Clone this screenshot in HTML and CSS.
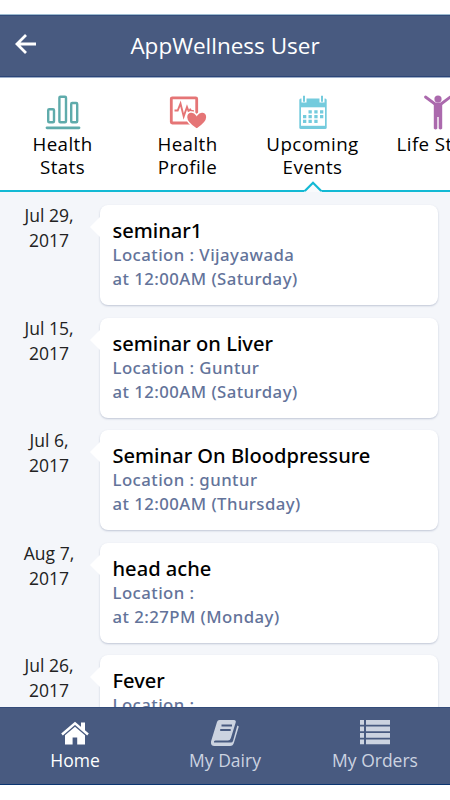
FILE: index.html
```html
<!DOCTYPE html>
<html lang="en">
<head>
    <meta charset="UTF-8">
    <meta name="viewport" content="width=device-width, initial-scale=1.0">
    <title>AppWellness User</title>
    <link rel="stylesheet" href="styles.css">
</head>
<body>
    <div class="app">

        <!-- Header -->
        <header class="header">
            <svg class="back" width="22" height="22" viewBox="0 0 22 22">
                <path d="M11 1L2 10l9 9M2 10h19" fill="none" stroke="#fff" stroke-width="2.8"/>
            </svg>
            <h1>AppWellness User</h1>
        </header>

        <!-- Tabs -->
        <nav class="tabs">
            <div class="tab">
                <svg width="36" height="36" viewBox="0 0 36 36">
                    <g fill="none" stroke="#5fabab" stroke-width="2.4">
                        <rect x="3.2" y="14.2" width="5.8" height="13" rx="1"/>
                        <rect x="14.4" y="1.7" width="6.6" height="25.5" rx="1"/>
                        <rect x="26.2" y="8" width="6" height="19.2" rx="1"/>
                        <path d="M2 32.8h32" stroke-width="2.8" stroke-linecap="round"/>
                    </g>
                </svg>
                <span>Health<br>Stats</span>
            </div>
            <div class="tab">
                <svg width="36" height="36" viewBox="0 0 36 36">
                    <g fill="none" stroke="#e57576">
                        <rect x="1.3" y="2.8" width="25.4" height="25.2" rx="1" stroke-width="2.8"/>
                        <path d="M4.500 15.500h3.200l2.800-7 3.200 13 3.300-9.500 1.700 4.500 1.500-2 1.200 1.500h2.400" stroke-width="1.900"/>
                    </g>
                    <path d="M26.700 34.200c-3-2-10.200-6.200-10.200-11.900 0-6 7-7.200 10.200-2.200 3.200-5 10.200-3.800 10.200 2.200 0 5.500-7.200 9.900-10.200 11.900z" fill="#e57576" stroke="#fff" stroke-width="1.500"/>
                </svg>
                <span>Health<br>Profile</span>
            </div>
            <div class="tab active">
                <svg width="36" height="36" viewBox="0 0 36 36">
                    <rect x="4.300" y="3.500" width="27.400" height="30.500" rx="1.500" fill="#74cbdd"/>
                    <path d="M6 12.300h24v18.500H6z" fill="#fff"/>
                    <path d="M6.500 0h5v7.500h-5zM24.500 0h5v7.500h-5z" fill="#fff"/>
                    <path d="M9 .8v6M27 .8v6" stroke="#74cbdd" stroke-width="2"/>
                    <path d="M13.500 15.300h3.300v3.300h-3.300zM19.300 15.300h3.300v3.300h-3.300zM25 15.300h3.300v3.300H25zM8 20h3.300v3.300H8zM13.500 20h3.300v3.300h-3.300zM19.300 20h3.300v3.300h-3.300zM25 20h3.300v3.300H25zM8 24.800h3.300v3.300H8zM13.500 24.800h3.300v3.300h-3.300zM19.300 24.800h3.300v3.300h-3.300z" fill="#74cbdd"/>
                </svg>
                <span>Upcoming<br>Events</span>
                <svg class="pointer" width="18" height="11" viewBox="0 0 18 11">
                    <path d="M0 11L9 2l9 9z" fill="#f9fafc"/>
                    <path d="M.8 10L9 1.800l8.200 8.200" fill="none" stroke="#13b9d4" stroke-width="2.200"/>
                </svg>
            </div>
            <div class="tab">
                <svg width="36" height="36" viewBox="0 0 36 36">
                    <circle cx="18" cy="4" r="3.600" fill="#ab69ad"/>
                    <path d="M5.500 2L15 9h6l9.500-7" fill="none" stroke="#ab69ad" stroke-width="2.800" stroke-linecap="round" stroke-linejoin="round"/>
                    <path d="M13.800 8.300h8.400v25.200q-1.800 2-3.500 0V22h-1.400v11.500q-1.700 2-3.500 0z" fill="#ab69ad"/>
                </svg>
                <span>Life Style</span>
            </div>
        </nav>

        <!-- Upcoming events -->
        <main class="events">
            <div class="event">
                <div class="date">Jul 29,<br>2017</div>
                <div class="card">
                    <h2>seminar1</h2>
                    <p>Location : Vijayawada<br>at 12:00AM (Saturday)</p>
                </div>
            </div>
            <div class="event">
                <div class="date">Jul 15,<br>2017</div>
                <div class="card">
                    <h2>seminar on Liver</h2>
                    <p>Location : Guntur<br>at 12:00AM (Saturday)</p>
                </div>
            </div>
            <div class="event">
                <div class="date">Jul 6,<br>2017</div>
                <div class="card">
                    <h2>Seminar On Bloodpressure</h2>
                    <p>Location : guntur<br>at 12:00AM (Thursday)</p>
                </div>
            </div>
            <div class="event">
                <div class="date">Aug 7,<br>2017</div>
                <div class="card">
                    <h2>head ache</h2>
                    <p>Location :<br>at 2:27PM (Monday)</p>
                </div>
            </div>
            <div class="event">
                <div class="date">Jul 26,<br>2017</div>
                <div class="card">
                    <h2>Fever</h2>
                    <p>Location :</p>
                </div>
            </div>
        </main>

        <!-- Bottom menu -->
        <footer class="menu">
            <div class="item selected">
                <svg width="30" height="28" viewBox="0 0 30 28">
                    <path d="M2 14.500L15 3.300l13 11.200" fill="none" stroke="currentColor" stroke-width="2.500"/>
                    <path d="M21 2.500h4v9l-4-3.500zM5 15.300l10-8.600 10 8.600V24.500h-7.800v-7h-4.600v7H5z" fill="currentColor"/>
                </svg>
                <span>Home</span>
            </div>
            <div class="item">
                <svg width="30" height="28" viewBox="0 0 30 28">
                    <path d="M9.500 0h14.500q2.300 0 1.700 2.500l-4.800 15.500q-.8 2.500-3 2.500H5.500q-2 0-1.500 2h17q1.500 0 2-1.500L27.300 5.500l1.500 1-4.800 16q-.9 3.500-4 3.500H4.500q-4 0-3.500-4.500L7 2q.6-2 2.500-2z" fill="currentColor"/>
                    <path d="M11.500 5.500h10.500M10.200 10h10.500" stroke="#485a80" stroke-width="1.800"/>
                </svg>
                <span>My Dairy</span>
            </div>
            <div class="item">
                <svg width="30" height="28" viewBox="0 0 30 28">
                    <path d="M0 0h4v4.700H0zM6 0h24v4.700H6zM0 6.500h4v4.700H0zM6 6.500h24v4.700H6zM0 13h4v4.700H0zM6 13h24v4.700H6zM0 19.500h4v4.700H0zM6 19.500h24v4.700H6z" fill="currentColor"/>
                </svg>
                <span>My Orders</span>
            </div>
        </footer>

    </div>
</body>
</html>
```
FILE: styles.css
```css
* {
    box-sizing: border-box;
}
body {
    margin: 0;
    font-family: "Open Sans", "Noto Sans", sans-serif;
    background-color: #fff;
    color: #111;
}
.app {
    display: flex;
    flex-direction: column;
    height: 800px;
    padding: 14px 0 15px;
    overflow: hidden;
}
.header {
    display: flex;
    align-items: center;
    height: 64px;
    flex: none;
    padding: 0 37px 2px 15px;
    background-color: #485a80;
    border-top: 1px solid #9dbbd0;
    border-bottom: 1px solid #9daec9;
    box-shadow: inset 0 1px #344c7a, inset 0 -1px #2c4577;
    color: #fff;
}
.header h1 {
    flex: 1;
    margin: 0;
    text-align: center;
    font-size: 22.5px;
    font-weight: 400;
}
.back {
    flex: none;
}
.tabs {
    display: flex;
    flex: none;
    height: 114px;
    border-bottom: 2px solid #13b9d4;
    background-color: #fff;
    color: #000;
}
.tab {
    position: relative;
    display: flex;
    flex-direction: column;
    align-items: center;
    flex: none;
    width: 125px;
    padding-top: 17px;
    font-size: 18.75px;
    line-height: 22.5px;
    letter-spacing: 0.4px;
    text-align: center;
    white-space: nowrap;
}
.tab svg {
    overflow: visible;
}
.tab span {
    margin-top: 2px;
}
.tab .pointer {
    position: absolute;
    left: 54px;
    bottom: -2px;
}
.events {
    flex: 1;
    min-height: 0;
    overflow: hidden;
    padding: 13px 12.5px 0 0;
    background-color: #f4f6fa;
}
.event {
    display: flex;
    margin-bottom: 12.5px;
}
.date {
    width: 100px;
    margin-top: -2px;
    padding-right: 2px;
    font-size: 17.5px;
    line-height: 25px;
    text-align: center;
    color: #222;
}
.card {
    position: relative;
    flex: 1;
    height: 100px;
    padding: 13px 12.5px;
    border-radius: 8px;
    background-color: #fff;
    box-shadow: 0 1px 2px rgba(72, 90, 128, 0.3);
    font-family: "Noto Sans", sans-serif;
}
.card::before {
    content: '';
    position: absolute;
    left: -10px;
    top: 12px;
    border: 10px solid transparent;
    border-left: 0;
    border-right-color: #fff;
}
.card h2 {
    margin: 0;
    font-size: 20.1px;
    font-weight: 500;
    line-height: 25px;
    color: #000;
}
.card p {
    margin: 0;
    font-size: 16.75px;
    font-weight: 500;
    line-height: 24px;
    letter-spacing: 0.45px;
    color: #63739a;
}
.menu {
    display: flex;
    flex: none;
    height: 78px;
    background-color: #485a80;
    border-top: 1px solid #344c7a;
    border-bottom: 1px solid #0b3570;
}
.item {
    display: flex;
    flex-direction: column;
    align-items: center;
    flex: 1;
    padding-top: 12px;
    font-size: 17.5px;
    line-height: 25px;
    color: #ccd3e0;
}
.item.selected {
    color: #fff;
}
```
